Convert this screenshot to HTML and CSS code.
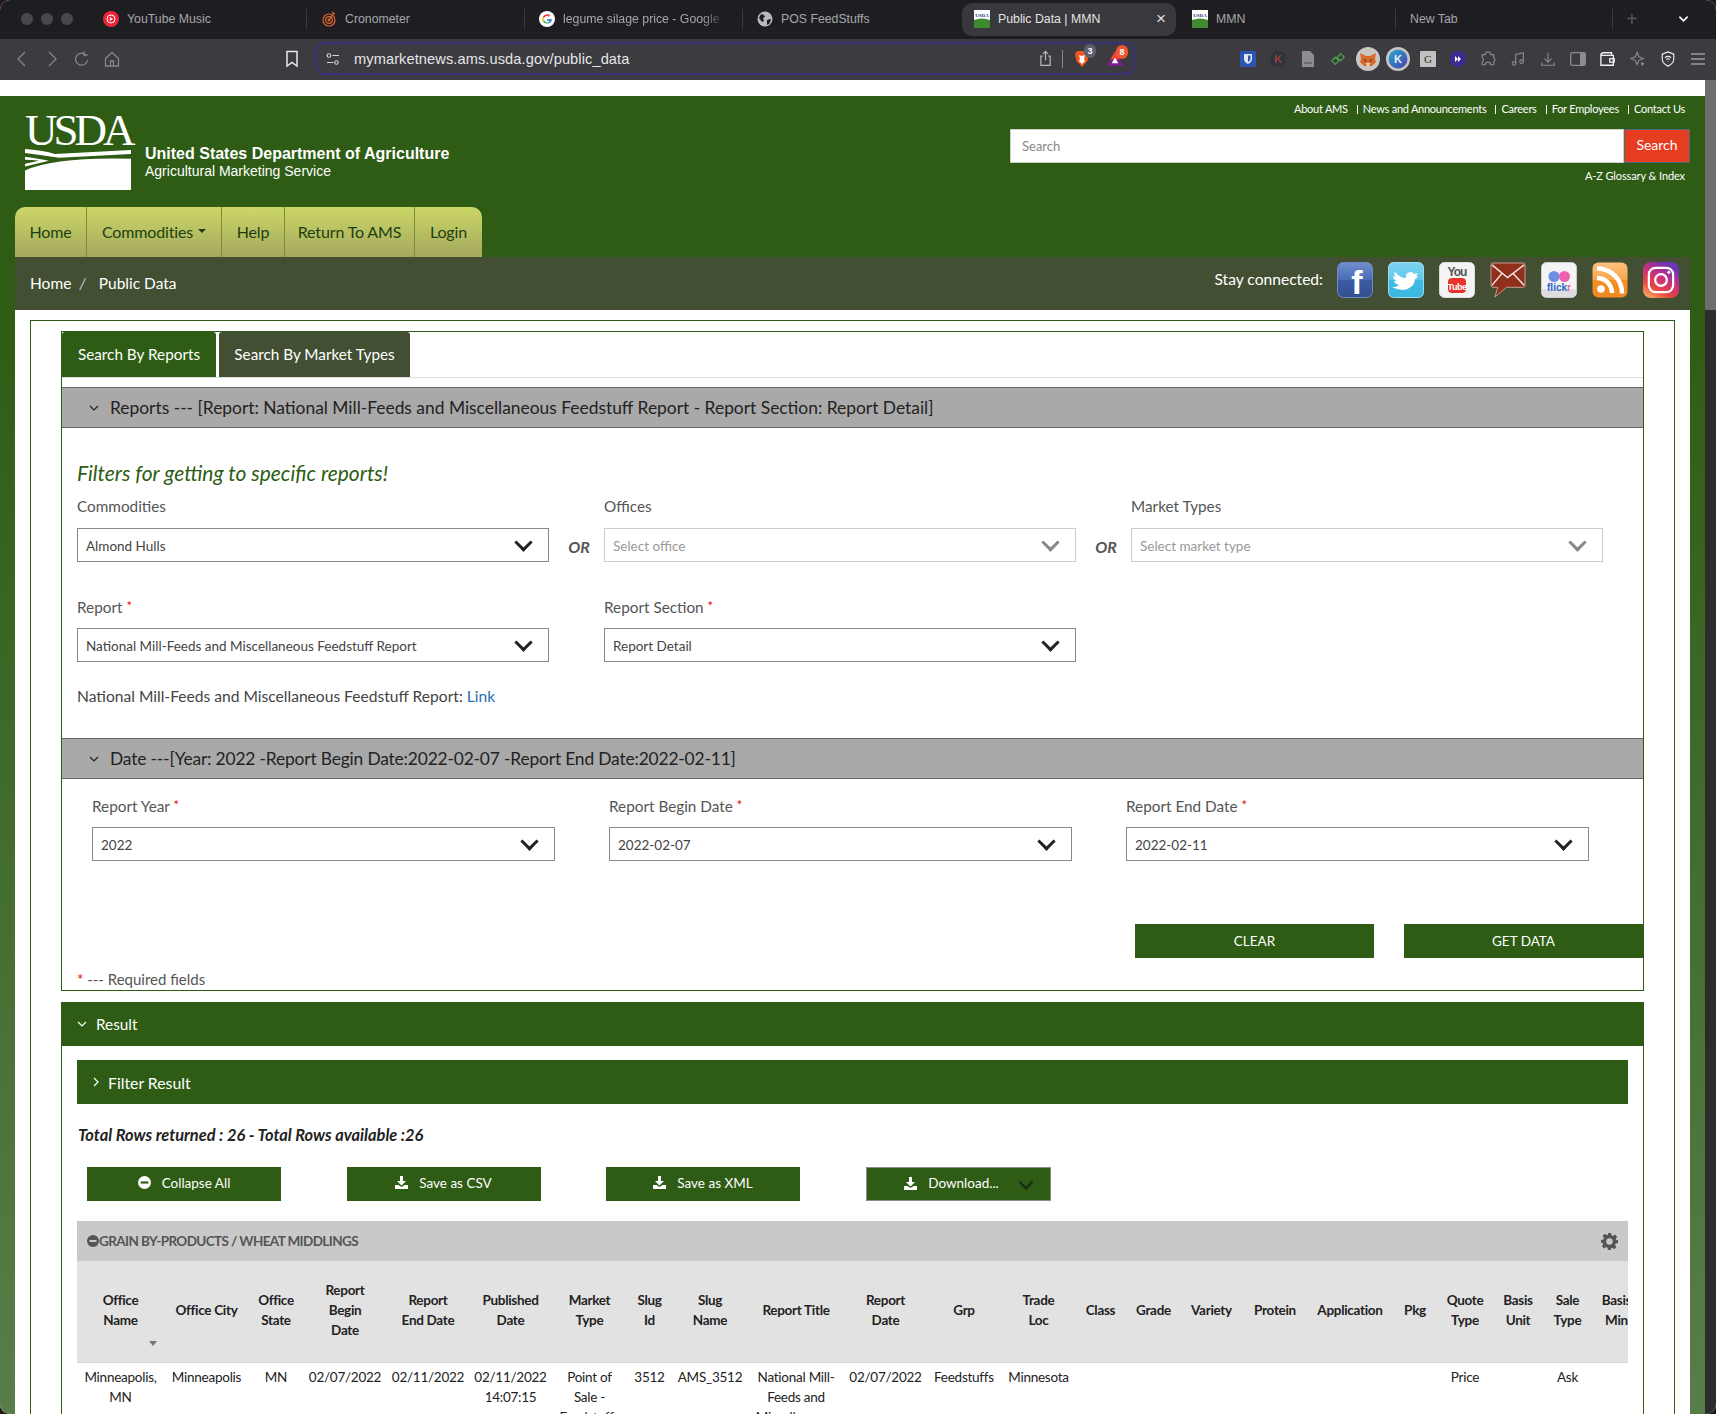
FILE: index.html
```html
<!DOCTYPE html>
<html lang="en">
<head>
    <meta charset="UTF-8">
    <meta name="viewport" content="width=device-width, initial-scale=1.0">
    <title>Public Data | MMN</title>
    <link rel="stylesheet" href="styles.css">
</head>
<body>
    <!-- browser chrome -->
    <div class="tabbar">
        <div class="lights"><i></i><i></i><i></i></div>
        <div class="tab first">
            <svg class="fav" viewBox="0 0 16 16"><circle cx="8" cy="8" r="8" fill="#f0243a"/><circle cx="8" cy="8" r="4" fill="none" stroke="#fff"/><path d="M6.8 6v4L10 8z" fill="#fff"/></svg>
            <span>YouTube Music</span>
        </div>
        <div class="tab">
            <svg class="fav" viewBox="0 0 16 16" fill="none" stroke="#d9662c" stroke-width="1.2"><circle cx="8" cy="9" r="6"/><circle cx="8" cy="9" r="3.4"/><circle cx="8" cy="9" r="1"/><path d="M8 9l5-7M11 1l3 2"/></svg>
            <span>Cronometer</span>
        </div>
        <div class="tab">
            <svg class="fav" viewBox="0 0 16 16"><circle cx="8" cy="8" r="8" fill="#fff"/><path d="M12.8 8.2H8.2v1.6h2.7a3.1 3.1 0 0 1-5.7-.6L3.8 10.300a4.900 4.900 0 0 0 9-2.100z" fill="#34a853"/><path d="M5 8a3.100 3.100 0 0 1 .2-1.200L3.800 5.700a4.900 4.900 0 0 0 0 4.600l1.400-1.100A3.100 3.100 0 0 1 5 8z" fill="#fbbc05"/><path d="M8 4.900a2.900 2.900 0 0 1 2 .8l1.200-1.200A4.900 4.900 0 0 0 3.800 5.700l1.400 1.100A3.100 3.100 0 0 1 8 4.900z" fill="#ea4335"/><path d="M12.800 8.200H8.200v1.600h2.700a2.600 2.600 0 0 1-1 1.300l1.300 1.100a4.800 4.800 0 0 0 1.600-4z" fill="#4285f4"/></svg>
            <span class="fade">legume silage price - Google</span>
        </div>
        <div class="tab">
            <svg class="fav" viewBox="0 0 16 16"><circle cx="8" cy="8" r="7.500" fill="#b9b9bd"/><path d="M4 3l3 1 1 2-2 1 1 3-2 1-3-4zM10 9l3-1 1 1-2 4-2 1z" fill="#1e1e22"/></svg>
            <span>POS FeedStuffs</span>
        </div>
        <div class="tab active">
            <svg class="fav" viewBox="0 0 16 18"><rect width="16" height="18" fill="#fff"/><text x="8" y="7" class="fav-usda">USDA</text><path d="M0 10q8-3 16 0v8H0z" fill="#3f8a2e"/></svg>
            <span>Public Data | MMN</span>
            <b class="tab-close">×</b>
        </div>
        <div class="tab mmn">
            <svg class="fav" viewBox="0 0 16 18"><rect width="16" height="18" fill="#fff"/><text x="8" y="7" class="fav-usda">USDA</text><path d="M0 10q8-3 16 0v8H0z" fill="#3f8a2e"/></svg>
            <span>MMN</span>
        </div>
        <div class="tab newtab"><span>New Tab</span></div>
        <div class="tab-plus">+</div>
        <svg class="tab-down" viewBox="0 0 12 8" fill="none" stroke="#fff" stroke-width="1.800"><path d="M1.500 1.500L6 6l4.500-4.500"/></svg>
    </div>

    <div class="toolbar">
        <div class="navbtns">
            <svg viewBox="0 0 18 18"><path d="M12 2L5 9l7 7"/></svg>
            <svg viewBox="0 0 18 18"><path d="M6 2l7 7-7 7"/></svg>
            <svg viewBox="0 0 18 18"><path d="M14.500 10A6 6 0 1 1 12 4.200M11 1.500V5h3.500"/></svg>
            <svg viewBox="0 0 18 18"><path d="M2.500 8.500L9 2.500l6.500 6V16h-13zM7.500 16v-5h3v5"/></svg>
        </div>
        <svg class="bookmark" viewBox="0 0 14 18" fill="none" stroke="#e8e8ea" stroke-width="1.500"><path d="M2 1.500h10V16l-5-3.500L2 16z"/></svg>
        <div class="urlbox">
            <svg class="tune" viewBox="0 0 14 14" fill="none" stroke="#d5d5d8" stroke-width="1.100"><circle cx="3" cy="3.500" r="1.800"/><path d="M6.500 3.500H13M1 10.500h6.500"/><circle cx="10.500" cy="10.500" r="1.800"/></svg>
            <span class="url">mymarketnews.ams.usda.gov/public_data</span>
            <svg class="share" viewBox="0 0 14 18" fill="none" stroke="#b8b8bc" stroke-width="1.300"><path d="M4 6.500H2v10h10v-10h-2M7 11V1.500M4.300 4L7 1.300 9.700 4"/></svg>
            <i class="urlsep"></i>
            <span class="shield">
                <svg viewBox="0 0 16 18"><path d="M3 1h10l2 3-1.500 7L8 17 2.500 11 1 4z" fill="#f0561d"/><path d="M5 5l3 1 3-1-1 4 1 2-3 3-3-3 1-2z" fill="#fff"/></svg>
                <em class="badge grey">3</em>
            </span>
            <span class="bat">
                <svg viewBox="0 0 18 16"><path d="M9 0l9 16H0z" fill="#7a1f8c"/><path d="M9 0l5 9H4z" fill="#f0442e"/><path d="M9 7l3.500 6h-7z" fill="#fff"/></svg>
                <em class="badge red">8</em>
            </span>
        </div>
        <div class="exts">
            <span><svg viewBox="0 0 16 16"><rect width="16" height="16" rx="2" fill="#2b55b3"/><path d="M4 3h8v5q0 3-4 5-4-2-4-5z" fill="#dfe6f5"/><path d="M8 4.500h2.500V8q0 1.500-2.500 3z" fill="#2b55b3"/></svg></span>
            <span><svg viewBox="0 0 16 16"><circle cx="8" cy="8" r="8" fill="#2e3340"/><text x="8" y="12" class="ext-k">K</text></svg></span>
            <span><svg viewBox="0 0 14 16"><path d="M1 0h8l4 4v12H1z" fill="#8d8d90"/><path d="M3 11h8v2H3z" fill="#6d6d70"/></svg></span>
            <span><svg viewBox="0 0 18 18" fill="none" stroke="#4f9a48" stroke-width="1.400"><path d="M2 11l4-4 4 4-4 4zM8 7l4-4 4 4-4 4z"/></svg></span>
            <span class="round">
                <svg viewBox="0 0 24 24"><circle cx="12" cy="12" r="12" fill="#c9c6c3"/><path d="M4 6l6 3h4l6-3-1 6 1 3-4 4H8l-4-4 1-3z" fill="#d9682c"/><path d="M8 12l2 1-1 2zM16 12l-2 1 1 2z" fill="#3a2a20"/><path d="M10 16h4l-1 3h-2z" fill="#e8d9c8"/></svg>
            </span>
            <span class="round">
                <svg viewBox="0 0 24 24"><defs><linearGradient id="kg" x1="0" y1="0" x2="1" y2="1"><stop offset="0" stop-color="#2aa9cf"/><stop offset="1" stop-color="#4a3fb0"/></linearGradient></defs><circle cx="12" cy="12" r="12" fill="#c9c6c3"/><circle cx="12" cy="12" r="9.500" fill="url(#kg)"/><text x="12" y="16" class="ext-k2">K</text></svg>
            </span>
            <span><svg viewBox="0 0 16 16"><rect width="16" height="16" rx="1" fill="#c2c2c2"/><text x="8" y="12" class="ext-g">G</text></svg></span>
            <span><svg viewBox="0 0 16 16"><circle cx="8" cy="8" r="8" fill="#3a2c92"/><path d="M5 5l3 3-3 3zM8 5l3 3-3 3z" fill="#fff"/></svg></span>
            <span><svg viewBox="0 0 18 18" class="line"><path d="M6 4a3 3 0 0 1 6 0h3.500v3.500a2.500 2.500 0 0 1 0 4.500v3.500H12a3 3 0 0 0-6 0H2.500V12a2.500 2.500 0 0 0 0-4.500V4z" stroke-linejoin="round"/></svg></span>
            <span><svg viewBox="0 0 18 18" class="line"><path d="M6.500 14V4L15 2v10"/><circle cx="4.500" cy="14" r="2"/><circle cx="13" cy="12" r="2"/></svg></span>
            <span><svg viewBox="0 0 18 18" class="line"><path d="M9 2v10M5 8.500L9 12.500l4-4M2 13v3h14v-3"/></svg></span>
            <span><svg viewBox="0 0 16 16"><rect x=".7" y="1.700" width="14.600" height="12.600" rx="1.500" fill="none" stroke="#8d8d90" stroke-width="1.300"/><rect x="10" y="2" width="5" height="12" fill="#8d8d90"/></svg></span>
            <span><svg viewBox="0 0 18 16" fill="none" stroke="#f0f0f0" stroke-width="1.500"><path d="M1 4h14v11H1zM1 4q0-3 3-3h9v3M16 7.500h-5v4h5z"/></svg></span>
            <span><svg viewBox="0 0 18 18" class="line"><path d="M8 1.500l2 5 5 2-5 2-2 5-2-5-5-2 5-2z"/><path d="M14 12.500v4M12 14.500h4"/></svg></span>
            <span><svg viewBox="0 0 16 18" fill="none" stroke="#f0f0f0" stroke-width="1.300"><path d="M8 1l6.500 2.500V9q0 5-6.500 8Q1.500 14 1.500 9V3.500z"/><path d="M4.500 7.500q3.500-3 7 0M6 9.500q2-1.500 4 0M8 11.500v.5"/></svg></span>
            <span><svg viewBox="0 0 16 14" fill="none" stroke="#9a9a9e" stroke-width="1.300"><path d="M1 2h14M1 7h14M1 12h14"/></svg></span>
        </div>
    </div>

    <div class="gap-row">
        <div class="gap-white"></div>
        <div class="thumb top"></div>
    </div>

    <div class="viewport">
        <div class="site">
            <header class="masthead">
                <div class="brand">
                    <div class="logo">
                        <div class="logo-word">USDA</div>
                        <svg class="logo-art" viewBox="0 0 106 42" preserveAspectRatio="none">
                            <path d="M0 0q16 1 30 5l76-4v4L34 9Q16 6 0 4z" fill="#fff"/>
                            <path d="M0 8q14 2 24 4L0 18v-3l14-3Q7 11 0 11zM0 22q30-14 106-12v32H0z" fill="#fff"/>
                        </svg>
                    </div>
                    <div class="brand-text">
                        <strong>United States Department of Agriculture</strong>
                        <span>Agricultural Marketing Service</span>
                    </div>
                </div>
                <div class="tools">
                    <ul class="toplinks">
                        <li>About AMS</li>
                        <li>News and Announcements</li>
                        <li>Careers</li>
                        <li>For Employees</li>
                        <li>Contact Us</li>
                    </ul>
                    <div class="searchbox">
                        <div class="search-input">Search</div>
                        <button class="search-btn">Search</button>
                    </div>
                    <div class="glossary">A-Z Glossary &amp; Index</div>
                </div>
            </header>

            <nav class="mainnav">
                <a class="n-home">Home</a>
                <a class="n-comm">Commodities <i class="caret"></i></a>
                <a class="n-help">Help</a>
                <a class="n-ret">Return To AMS</a>
                <a class="n-login">Login</a>
            </nav>

            <div class="crumbbar">
                <div class="crumbs"><span>Home</span><em>/</em><span>Public Data</span></div>
                <div class="social">
                    <span class="stay">Stay connected:</span>
                    <svg class="soc" viewBox="0 0 36 36"><defs><linearGradient id="fb" x1="0" y1="0" x2="0" y2="1"><stop offset="0" stop-color="#6f8fcf"/><stop offset=".5" stop-color="#4a6cb4"/><stop offset=".5" stop-color="#3b5aa2"/><stop offset="1" stop-color="#33508f"/></linearGradient></defs><rect x=".5" y=".5" width="35" height="35" rx="6" fill="url(#fb)" stroke="#6d8ac4"/><text x="20" y="32" class="soc-f">f</text></svg>
                    <svg class="soc" viewBox="0 0 36 36"><defs><linearGradient id="tw" x1="0" y1="0" x2="0" y2="1"><stop offset="0" stop-color="#7ed3f0"/><stop offset=".5" stop-color="#62c8ea"/><stop offset=".5" stop-color="#40bde4"/><stop offset="1" stop-color="#3ab7df"/></linearGradient></defs><rect x=".5" y=".5" width="35" height="35" rx="5" fill="url(#tw)" stroke="#9adcf2"/><path d="M8 10q5 6 11 6-1-6 5-6 2 0 3 2l4-1-2 3 2 0q-2 3-3 3 0 9-12 11-6 0-11-3 5 0 7-2-4-1-5-4h3q-4-2-4-5l3 1q-3-3-1-5z" fill="#fff" transform="translate(-1 0)"/></svg>
                    <svg class="soc" viewBox="0 0 36 36"><rect x=".5" y=".5" width="35" height="35" rx="5" fill="#f4f4f4" stroke="#ddd"/><text x="18" y="14" class="soc-you">You</text><rect x="9" y="16" width="18" height="15" rx="4" fill="#e8322c"/><text x="18" y="28" class="soc-tube">Tube</text></svg>
                    <svg class="soc mail" viewBox="0 0 37 37"><path d="M3 1h31q2 0 2 2v21q0 2-2 2H17L5 36l3-10H3q-2 0-2-2V3q0-2 2-2z" fill="#8f2f1c" stroke="#c9a097"/><path d="M2 3l16 13L35 3M2 24l10-12M35 24L24 12" fill="none" stroke="#f3e4df" stroke-width="1.500"/></svg>
                    <svg class="soc" viewBox="0 0 36 36"><rect x=".5" y=".5" width="35" height="35" rx="5" fill="#f4f4f4" stroke="#ccc"/><path d="M1 27h34v4q0 4-4 4H5q-4 0-4-4z" fill="#dedede"/><circle cx="13" cy="14.500" r="5.500" fill="#6d8ee6"/><circle cx="23.500" cy="14.500" r="5.500" fill="#ee5fb0"/><text x="18" y="29" class="soc-flickr">flick<tspan fill="#ee5fb0">r</tspan></text></svg>
                    <svg class="soc" viewBox="0 0 36 36"><defs><linearGradient id="rs" x1="0" y1="0" x2="0" y2="1"><stop offset="0" stop-color="#fcc37e"/><stop offset=".5" stop-color="#f8a34a"/><stop offset=".5" stop-color="#f58f25"/><stop offset="1" stop-color="#f08a20"/></linearGradient></defs><rect x=".5" y=".5" width="35" height="35" rx="6" fill="url(#rs)"/><circle cx="9" cy="27" r="3.800" fill="#fff"/><path d="M5 16a15 15 0 0 1 15 15M5 6.500a24.500 24.500 0 0 1 25 25" fill="none" stroke="#fff" stroke-width="4.500"/></svg>
                    <svg class="soc" viewBox="0 0 37 37"><defs><linearGradient id="ig" x1="0" y1="1" x2=".6" y2="0"><stop offset="0" stop-color="#fdc468"/><stop offset=".35" stop-color="#e8463f"/><stop offset=".65" stop-color="#c9307f"/><stop offset="1" stop-color="#6a34b5"/></linearGradient></defs><rect width="37" height="37" rx="8" fill="url(#ig)"/><rect x="6" y="6" width="25" height="25" rx="7" fill="none" stroke="#fff" stroke-width="2.300"/><circle cx="18.500" cy="18.500" r="6" fill="none" stroke="#fff" stroke-width="2.300"/><circle cx="26.500" cy="10.500" r="1.600" fill="#fff"/></svg>
                </div>
            </div>

            <main class="content">
                <div class="outer">
                    <section class="panel">
                        <div class="tabs">
                            <div class="ptab on">Search By Reports</div>
                            <div class="ptab">Search By Market Types</div>
                        </div>

                        <div class="acc-head first-head">
                            <svg class="chev" viewBox="0 0 10 6"><path d="M1 1l4 4 4-4"/></svg>
                            <span>Reports --- [Report: National Mill-Feeds and Miscellaneous Feedstuff Report - Report Section: Report Detail]</span>
                        </div>

                        <div class="filters">
                            <h3 class="filters-title">Filters for getting to specific reports!</h3>
                            <div class="row-3">
                                <div class="field">
                                    <label>Commodities</label>
                                    <div class="select">Almond Hulls</div>
                                </div>
                                <div class="or">OR</div>
                                <div class="field">
                                    <label>Offices</label>
                                    <div class="select off">Select office</div>
                                </div>
                                <div class="or">OR</div>
                                <div class="field">
                                    <label>Market Types</label>
                                    <div class="select off">Select market type</div>
                                </div>
                            </div>
                            <div class="row-3 second">
                                <div class="field">
                                    <label>Report <b>*</b></label>
                                    <div class="select">National Mill-Feeds and Miscellaneous Feedstuff Report</div>
                                </div>
                                <div class="or"></div>
                                <div class="field">
                                    <label>Report Section <b>*</b></label>
                                    <div class="select">Report Detail</div>
                                </div>
                            </div>
                            <p class="report-link">National Mill-Feeds and Miscellaneous Feedstuff Report: <a>Link</a></p>
                        </div>

                        <div class="acc-head date-head">
                            <svg class="chev" viewBox="0 0 10 6"><path d="M1 1l4 4 4-4"/></svg>
                            <span>Date ---[Year: 2022 -Report Begin Date:2022-02-07 -Report End Date:2022-02-11]</span>
                        </div>

                        <div class="dates">
                            <div class="field">
                                <label>Report Year <b>*</b></label>
                                <div class="select">2022</div>
                            </div>
                            <div class="field">
                                <label>Report Begin Date <b>*</b></label>
                                <div class="select">2022-02-07</div>
                            </div>
                            <div class="field">
                                <label>Report End Date <b>*</b></label>
                                <div class="select">2022-02-11</div>
                            </div>
                        </div>

                        <div class="actions">
                            <button class="btn wide">CLEAR</button>
                            <button class="btn wide">GET DATA</button>
                        </div>
                        <div class="required"><b>*</b> --- Required fields</div>
                    </section>

                    <section class="result">
                        <div class="result-head">
                            <svg class="chev" viewBox="0 0 10 6"><path d="M1 1l4 4 4-4"/></svg>
                            <span>Result</span>
                        </div>
                        <div class="result-body">
                            <div class="filter-head">
                                <svg class="chev side" viewBox="0 0 6 10"><path d="M1 1l4 4-4 4"/></svg>
                                <span>Filter Result</span>
                            </div>
                            <p class="totals">Total Rows returned : 26 - Total Rows available :26</p>
                            <div class="result-btns">
                                <button class="btn act">
                                    <svg viewBox="0 0 12 12"><circle cx="6" cy="6" r="6" fill="#fff"/><rect x="2.500" y="5" width="7" height="2" fill="#2e5c14"/></svg>
                                    Collapse All
                                </button>
                                <button class="btn act">
                                    <svg viewBox="0 0 13 13"><path d="M5 0h3v5h3L6.500 9.500 2 5h3zM0 9h3.500l3 2 3-2H13v4H0z" fill="#fff"/></svg>
                                    Save as CSV
                                </button>
                                <button class="btn act">
                                    <svg viewBox="0 0 13 13"><path d="M5 0h3v5h3L6.500 9.500 2 5h3zM0 9h3.500l3 2 3-2H13v4H0z" fill="#fff"/></svg>
                                    Save as XML
                                </button>
                                <button class="btn act dl">
                                    <svg viewBox="0 0 13 13"><path d="M5 0h3v5h3L6.500 9.500 2 5h3zM0 9h3.500l3 2 3-2H13v4H0z" fill="#fff"/></svg>
                                    Download...
                                    <svg class="dl-chev" viewBox="0 0 16 10" fill="none" stroke="#1d2a12" stroke-width="2.400"><path d="M1.500 1.500L8 8.500l6.500-7"/></svg>
                                </button>
                            </div>

                            <div class="group-head">
                                <svg class="minus" viewBox="0 0 12 12"><circle cx="6" cy="6" r="6" fill="#555"/><rect x="2.500" y="5" width="7" height="2" fill="#c9c9c9"/></svg>
                                <span>GRAIN BY-PRODUCTS / WHEAT MIDDLINGS</span>
                                <svg class="gear" viewBox="0 0 16 16"><path fill="#555" fill-rule="evenodd" d="M6.500 0h3l.4 2.200 1.300.6L13.100 1.500l2.100 2.100-1.300 1.900.6 1.300L16 6.500v3l-2.200.4-.6 1.300 1.300 1.900-2.100 2.100-1.900-1.300-1.300.6L9.500 16h-3l-.4-2.200-1.300-.6-1.900 1.300L.8 12.400l1.300-1.900-.6-1.300L0 9.500v-3l2.200-.4.6-1.300L1.500 2.900 3.600.8l1.900 1.300 1.300-.6zM8 5a3 3 0 1 0 0 6 3 3 0 0 0 0-6z"/></svg>
                            </div>

                            <div class="table-wrap">
                                <table class="grid">
                                    <colgroup>
                                        <col width="87"><col width="85"><col width="54"><col width="84"><col width="82"><col width="83"><col width="75"><col width="45"><col width="76"><col width="96"><col width="83"><col width="74"><col width="75"><col width="49"><col width="57"><col width="59"><col width="68"><col width="82"><col width="48"><col width="52"><col width="54"><col width="45"><col width="53">
                                    </colgroup>
                                    <thead>
                                        <tr>
                                            <th class="sorted">Office<br>Name</th>
                                            <th>Office City</th>
                                            <th>Office<br>State</th>
                                            <th>Report<br>Begin<br>Date</th>
                                            <th>Report<br>End Date</th>
                                            <th>Published<br>Date</th>
                                            <th>Market<br>Type</th>
                                            <th>Slug<br>Id</th>
                                            <th>Slug<br>Name</th>
                                            <th>Report Title</th>
                                            <th>Report<br>Date</th>
                                            <th>Grp</th>
                                            <th>Trade<br>Loc</th>
                                            <th>Class</th>
                                            <th>Grade</th>
                                            <th>Variety</th>
                                            <th>Protein</th>
                                            <th>Application</th>
                                            <th>Pkg</th>
                                            <th>Quote<br>Type</th>
                                            <th>Basis<br>Unit</th>
                                            <th>Sale<br>Type</th>
                                            <th>Basis<br>Min</th>
                                        </tr>
                                    </thead>
                                    <tbody>
                                        <tr>
                                            <td>Minneapolis, MN</td>
                                            <td>Minneapolis</td>
                                            <td>MN</td>
                                            <td>02/07/2022</td>
                                            <td>02/11/2022</td>
                                            <td>02/11/2022 14:07:15</td>
                                            <td>Point of<br>Sale -<br>Feedstuffs</td>
                                            <td>3512</td>
                                            <td>AMS_3512</td>
                                            <td>National Mill-Feeds and Miscellaneous Feedstuff Report</td>
                                            <td>02/07/2022</td>
                                            <td>Feedstuffs</td>
                                            <td>Minnesota</td>
                                            <td></td>
                                            <td></td>
                                            <td></td>
                                            <td></td>
                                            <td></td>
                                            <td></td>
                                            <td>Price</td>
                                            <td></td>
                                            <td>Ask</td>
                                            <td></td>
                                        </tr>
                                    </tbody>
                                </table>
                            </div>
                        </div>
                    </section>
                </div>
            </main>
        </div>
        <div class="scrolltrack"></div>
    </div>
</body>
</html>
```

FILE: styles.css
```css
* {
    margin: 0;
    padding: 0;
    box-sizing: border-box;
}

html {
    background: #241816;
}

body {
    width: 1716px;
    height: 1414px;
    overflow: hidden;
    border-radius: 10px;
    font-family: Lato, "Open Sans", sans-serif;
    font-size: 15px;
    color: #444;
    background: #fff;
}

/* browser chrome */
.tabbar {
    height: 39px;
    padding-bottom: 2px;
    background: #1e1e22;
    display: flex;
    align-items: center;
    font-family: "Liberation Sans", Arial, sans-serif;
    font-size: 12.300px;
    color: #a6a6aa;
}

.lights {
    width: 88px;
    padding-left: 21px;
    display: flex;
    gap: 8px;
}

.lights i {
    width: 12px;
    height: 12px;
    border-radius: 50%;
    background: #48484c;
}

.tab {
    width: 218px;
    height: 20px;
    padding-left: 14px;
    border-left: 1px solid #3c3c40;
    display: flex;
    align-items: center;
    gap: 8px;
    white-space: nowrap;
    overflow: hidden;
}

.tab.first {
    border-left-color: transparent;
}

.fade {
    width: 163px;
    overflow: hidden;
    mask-image: linear-gradient(90deg, #000 85%, transparent);
}

.fav {
    width: 16px;
    height: 18px;
    flex: none;
}

.fav-usda {
    font: bold 5px "Liberation Serif", serif;
    fill: #223a7a;
    text-anchor: middle;
}

.tab.active {
    width: 214px;
    height: 33px;
    margin: 1px 2px 0 2px;
    padding: 0 10px 0 12px;
    border: 0;
    border-radius: 10px;
    background: #38383d;
    color: #e4e4e6;
}

.tab-close {
    margin-left: auto;
    font-weight: 400;
    font-size: 17px;
    color: #ddd;
}

.tab.mmn {
    border-left: 0;
    padding-left: 14px;
    width: 217px;
}

.tab.newtab {
    width: 217px;
}

.tab-plus {
    border-left: 1px solid #3c3c40;
    height: 20px;
    padding-left: 13px;
    width: 48px;
    font-size: 20px;
    line-height: 20px;
    color: #55555a;
}

.tab-down {
    width: 11px;
    height: 8px;
    margin-left: 18px;
}

.toolbar {
    height: 41px;
    padding-bottom: 2px;
    background: #3b3b40;
    display: flex;
    align-items: center;
    font-family: "Liberation Sans", Arial, sans-serif;
}

.navbtns {
    display: flex;
    width: 285px;
    padding-left: 13px;
    gap: 12px;
}

.navbtns svg {
    width: 18px;
    height: 18px;
    fill: none;
    stroke: #85858a;
    stroke-width: 1.300;
}

.bookmark {
    width: 14px;
    height: 18px;
}

.urlbox {
    width: 820px;
    height: 33px;
    margin-left: 16px;
    border: 2px solid #37317a;
    border-radius: 9px;
    display: flex;
    align-items: center;
    padding-left: 9px;
}

.tune {
    width: 14px;
    height: 14px;
}

.url {
    margin-left: 14px;
    font-size: 14.600px;
    color: #e6e6e8;
    letter-spacing: .1px;
}

.share {
    width: 13px;
    height: 17px;
    margin-left: auto;
}

.urlsep {
    width: 1px;
    height: 18px;
    background: #8a8a8e;
    margin: 0 11px 0 10px;
}

.shield,
.bat {
    position: relative;
    display: block;
    width: 16px;
    height: 18px;
}

.shield svg,
.bat svg {
    width: 100%;
    height: 100%;
    display: block;
}

.bat {
    margin: 0 9px 0 16px;
    width: 18px;
    height: 15px;
}

.badge {
    position: absolute;
    top: -6px;
    left: 10px;
    width: 12px;
    height: 14px;
    border-radius: 7px;
    font: 700 9px/14px "Liberation Sans", sans-serif;
    text-align: center;
    color: #fff;
}

.badge.grey {
    background: #5c5f6e;
}

.badge.red {
    background: #f0562e;
}

.exts {
    display: flex;
    margin-left: 98px;
}

.exts span {
    width: 30px;
    display: flex;
    justify-content: center;
    align-items: center;
}

.exts svg {
    width: 16px;
    height: 16px;
}

.exts .round svg {
    width: 24px;
    height: 24px;
}

.line {
    fill: none;
    stroke: #8a8a8e;
    stroke-width: 1.300;
}

.ext-k {
    font: 700 11px "Liberation Sans", sans-serif;
    fill: #a33b3b;
    text-anchor: middle;
}

.ext-k2 {
    font: 700 11px "Liberation Sans", sans-serif;
    fill: #e6f4fa;
    text-anchor: middle;
}

.ext-g {
    font: 400 11px "Liberation Serif", serif;
    fill: #333;
    text-anchor: middle;
}

.gap-row {
    display: flex;
    height: 16px;
}

.gap-white {
    flex: 1;
    background: #fff;
}

.thumb.top {
    width: 11px;
    background: #6e6e6e;
}

/* page */
.viewport {
    display: flex;
    height: 1318px;
}

.site {
    flex: 1;
    min-width: 0;
    padding: 0 15px;
    background: linear-gradient(#2e5c14 0, #2e5c14 210px, #597d4a 100%);
}

.scrolltrack {
    width: 11px;
    background: linear-gradient(#6e6e6e 0, #6e6e6e 214px, #2c2c2c 214px);
}

.masthead {
    height: 111px;
    display: flex;
    justify-content: space-between;
    color: #fff;
}

.brand {
    display: flex;
    padding: 18px 0 0 10px;
}

.logo {
    width: 106px;
}

.logo-word {
    font: 400 45px/32px "Liberation Serif", serif;
    letter-spacing: -4px;
    height: 36px;
}

.logo-art {
    display: block;
    width: 106px;
    height: 41px;
    margin-top: -1px;
}

.brand-text {
    margin: 31px 0 0 14px;
    display: flex;
    flex-direction: column;
    font-family: "Liberation Sans", Arial, sans-serif;
}

.brand-text strong {
    font-size: 16px;
    line-height: 18px;
}

.brand-text span {
    font-size: 14px;
    line-height: 17px;
}

.tools {
    width: 680px;
    padding-top: 6px;
}

.toplinks {
    display: flex;
    justify-content: flex-end;
    list-style: none;
    font-size: 11px;
    letter-spacing: -.25px;
    line-height: 14px;
    padding-right: 5px;
}

.toplinks li + li {
    margin-left: 9px;
    padding-left: 6px;
    position: relative;
}

.toplinks li + li::before {
    content: "";
    position: absolute;
    left: 0;
    top: 3px;
    height: 9px;
    border-left: 1px solid #fff;
}

.searchbox {
    display: flex;
    height: 34px;
    margin-top: 13px;
}

.search-input {
    flex: 1;
    background: #fff;
    border: 1px solid #c9d0c6;
    padding-left: 11px;
    font-size: 13px;
    line-height: 32px;
    color: #888;
}

.search-btn {
    width: 66px;
    border: 1px solid #4a6a80;
    background: #e63c22;
    color: #fff;
    font: 14px Lato, sans-serif;
    padding-bottom: 3px;
}

.glossary {
    margin-top: 6px;
    padding-right: 5px;
    text-align: right;
    font-size: 11px;
    letter-spacing: -.1px;
    line-height: 14px;
}

.mainnav {
    display: flex;
    height: 50px;
}

.mainnav a {
    display: flex;
    align-items: center;
    justify-content: center;
    gap: 5px;
    padding-bottom: 2px;
    font-size: 16px;
    letter-spacing: -.15px;
    color: #1c3f12;
    background: linear-gradient(#ccd768, #a3a85c);
    border-right: 1px solid #808a3e;
}

.n-home {
    width: 72px;
    border-radius: 10px 0 0 0;
}

.n-comm {
    width: 135px;
}

.n-help {
    width: 63px;
}

.n-ret {
    width: 130px;
}

.mainnav .n-login {
    width: 67px;
    border-right: 0;
    border-radius: 0 10px 0 0;
}

.caret {
    border: 4px solid transparent;
    border-top-color: #1c3f12;
    border-bottom: 0;
}

.crumbbar {
    height: 53px;
    background: #434f33;
    display: flex;
    align-items: center;
    justify-content: space-between;
    color: #fff;
    padding: 0 11px 0 15px;
    font-size: 15.500px;
}

.crumbs {
    display: flex;
    gap: 8px;
    padding-bottom: 2px;
}

.crumbs em {
    color: #c9c9c9;
    padding: 0 3px 0 0;
    margin-right: 2px;
}

.social {
    display: flex;
    align-items: center;
    gap: 15px;
    margin-top: -7px;
}

.stay {
    margin: 0 -1px 3px 0;
    font-size: 15.600px;
}

.soc {
    width: 36px;
    height: 36px;
    display: block;
}

.soc-f {
    font: 700 34px "Liberation Sans", sans-serif;
    fill: #fff;
    text-anchor: middle;
}

.soc-you {
    font: 700 12px "Liberation Sans", sans-serif;
    letter-spacing: -1px;
    fill: #555;
    text-anchor: middle;
}

.soc-tube {
    font: 700 9px "Liberation Sans", sans-serif;
    letter-spacing: -.5px;
    fill: #fff;
    text-anchor: middle;
}

.soc-flickr {
    font: 700 10px "Liberation Sans", sans-serif;
    fill: #2a62c9;
    text-anchor: middle;
}

.content {
    background: #fff;
    padding: 10px 15px 0;
    height: 1104px;
    overflow: hidden;
}

.outer {
    border: 1px solid #2e5c14;
    padding: 10px 30px 0;
    height: 1200px;
}

/* search panel */
.panel {
    border: 1px solid #2e5c14;
    height: 660px;
    overflow: hidden;
}

.tabs {
    height: 46px;
    display: flex;
    gap: 3px;
    border-bottom: 1px solid #ddd;
}

.ptab {
    width: 191px;
    background: #434f33;
    color: #fff;
    font-size: 15.300px;
    line-height: 44px;
    text-align: center;
    border-radius: 3px 3px 0 0;
}

.ptab.on {
    width: 154px;
    background: #2e5c14;
}

.acc-head {
    height: 41px;
    background: #a9a9a9;
    border-top: 1px solid #666;
    border-bottom: 1px solid #666;
    display: flex;
    align-items: center;
    padding-left: 27px;
    font-size: 17.400px;
    color: #222;
    white-space: nowrap;
}

.first-head {
    margin-top: 9px;
}

.date-head {
    letter-spacing: -.17px;
}

.chev {
    width: 10px;
    height: 6px;
    margin-right: 11px;
    fill: none;
    stroke: currentColor;
    stroke-width: 1.200;
}

.filters {
    height: 310px;
    padding: 29px 15px 0;
}

.filters-title {
    font-size: 21px;
    font-weight: 400;
    font-style: italic;
    line-height: 32px;
    color: #2e5c14;
}

.row-3 {
    display: grid;
    grid-template-columns: 472px 55px 472px 55px 472px;
    margin-top: 7px;
}

.row-3.second {
    margin-top: 34px;
}

.field label {
    display: block;
    height: 21px;
    line-height: 20px;
    font-size: 15.300px;
    margin-bottom: 11px;
    color: #555;
}

.field label b {
    color: #e00;
    font-weight: 400;
    vertical-align: 2px;
    font-size: 13px;
}

.select {
    position: relative;
    height: 34px;
    border: 1px solid #888;
    padding-left: 8px;
    line-height: 35px;
    font-size: 13.500px;
    color: #444;
}

.select.off {
    border-color: #ccc;
    color: #999;
}

.select::after {
    content: "";
    position: absolute;
    right: 18px;
    top: 7px;
    width: 10px;
    height: 10px;
    border-right: 3px solid #222;
    border-bottom: 3px solid #222;
    transform: rotate(45deg);
}

.select.off::after {
    border-color: #888;
}

.or {
    padding: 41px 0 0 5px;
    text-align: center;
    font-size: 16px;
    font-weight: 700;
    font-style: italic;
    color: #555;
}

.report-link {
    margin-top: 24px;
    line-height: 20px;
    font-size: 15.600px;
    color: #444;
}

.report-link a {
    color: #2a6fb5;
}

.dates {
    display: grid;
    grid-template-columns: 463px 463px 463px;
    column-gap: 54px;
    padding: 16px 0 0 30px;
}

.actions {
    display: flex;
    justify-content: flex-end;
    gap: 30px;
    margin-top: 63px;
}

.btn {
    border: 0;
    background: #2e5c14;
    color: #fff;
    font: 13.500px Lato, sans-serif;
    height: 34px;
}

.btn.wide {
    width: 239px;
}

.required {
    margin-top: 11px;
    padding-left: 15px;
    line-height: 20px;
    color: #555;
}

.required b {
    color: #e00;
    font-weight: 400;
}

/* result panel */
.result {
    margin-top: 11px;
    border-left: 1px solid #2e5c14;
    border-right: 1px solid #2e5c14;
    height: 500px;
}

.result-head {
    height: 44px;
    margin: 0 -1px;
    background: #2e5c14;
    color: #fff;
    display: flex;
    align-items: center;
    padding-left: 16px;
    font-size: 15.300px;
}

.result-head .chev {
    margin-right: 9px;
}

.result-body {
    padding: 14px 15px 0;
}

.filter-head {
    height: 44px;
    background: #2e5c14;
    color: #fff;
    display: flex;
    align-items: center;
    padding-left: 16px;
    font-size: 15.800px;
}

.chev.side {
    width: 6px;
    height: 10px;
    margin-right: 9px;
}

.totals {
    margin-top: 21px;
    padding-left: 1px;
    line-height: 20px;
    font-size: 16.400px;
    font-weight: 700;
    font-style: italic;
    color: #222;
}

.result-btns {
    display: flex;
    padding-left: 10px;
    margin-top: 22px;
    gap: 65.500px;
}

.btn.act {
    width: 194px;
    padding-bottom: 3px;
    display: flex;
    align-items: center;
    justify-content: center;
    gap: 11px;
}

.btn.act svg {
    width: 13px;
    height: 13px;
}

.btn.act.dl {
    width: 185px;
    border: 1px solid #8a8f86;
    padding-left: 22px;
    padding-bottom: 2px;
}

.btn.act svg.dl-chev {
    width: 16px;
    height: 10px;
    margin-left: 8px;
    margin-top: 3px;
}

.group-head {
    margin-top: 20px;
    height: 40px;
    background: #c9c9c9;
    display: flex;
    align-items: center;
    padding: 0 10px;
    font-size: 13.500px;
    font-weight: 700;
    letter-spacing: -.6px;
    color: #555;
}

.minus {
    width: 12px;
    height: 12px;
}

.gear {
    width: 17px;
    height: 17px;
    margin-left: auto;
}

.table-wrap {
    overflow: hidden;
}

.grid {
    table-layout: fixed;
    width: 1566px;
    border-collapse: collapse;
    font-size: 14px;
    line-height: 20px;
    color: #222;
    text-align: center;
}

.grid th {
    height: 101px;
    background: #e2e2e2;
    border-bottom: 1px solid #d5d5d5;
    padding: 0 2px 2px;
    font-size: 13.500px;
    font-weight: 700;
    letter-spacing: -.3px;
    position: relative;
}

.grid td {
    padding: 4px 2px;
    vertical-align: top;
    font-size: 13.500px;
    letter-spacing: -.25px;
}

.grid th.sorted::after {
    content: "";
    position: absolute;
    right: 7px;
    bottom: 16px;
    border: 4px solid transparent;
    border-top: 5px solid #777;
    border-bottom: 0;
}
```
